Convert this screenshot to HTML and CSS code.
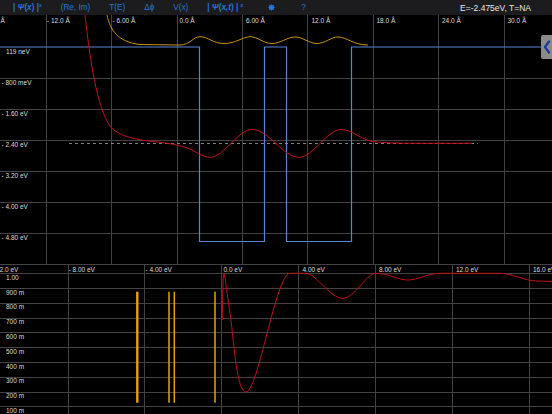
FILE: index.html
```html
<!DOCTYPE html>
<html lang="en">
<head>
  <meta charset="UTF-8" />
  <meta name="viewport" content="width=device-width, initial-scale=1.0" />
  <title>Wave packet – potential well</title>
  <link rel="stylesheet" href="styles.css">
</head>
<body>
  <div class="toolbar">
    <div class="tabs">
      <span class="tab strong">| <i>Ψ</i>(<i>x</i>) |²</span>
      <span class="tab">(Re, Im)</span>
      <span class="tab">T(E)</span>
      <span class="tab">Δϕ</span>
      <span class="tab">V(x)</span>
      <span class="tab strong">| <i>Ψ</i>(<i>x,t</i>) | ²</span>
      <span class="tab">
        <svg class="gear" viewBox="0 0 10 10">
          <circle cx="5" cy="5" r="2.8" />
          <path d="M5 0.6v8.8M0.6 5h8.8M1.9 1.9l6.2 6.2M8.1 1.9l-6.2 6.2" />
        </svg>
      </span>
      <span class="tab">?</span>
    </div>
    <div class="readout">E=-2.475eV, T=NA</div>
  </div>

  <!-- wave function / potential -->
  <svg class="plot plot-top" width="552" height="250" viewBox="0 15 552 250">
    <g class="grid">
      <path d="M46.5 15V265M111.5 15V265M177.5 15V265M242.5 15V265M307.5 15V265M373.5 15V265M438.5 15V265M504.5 15V265" />
      <path d="M0 78.5H552M0 109.5H552M0 140.5H552M0 171.5H552M0 202.5H552M0 233.5H552M0 264.5H552" />
    </g>
    <g class="axis-label">
      <text x="-18" y="22.5">- 18.0 Å</text>
      <text x="47" y="22.5">- 12.0 Å</text>
      <text x="112.5" y="22.5">- 6.00 Å</text>
      <text x="179.5" y="22.5">0.0 Å</text>
      <text x="246" y="22.5">6.00 Å</text>
      <text x="311.5" y="22.5">12.0 Å</text>
      <text x="376.5" y="22.5">18.0 Å</text>
      <text x="442" y="22.5">24.0 Å</text>
      <text x="507.5" y="22.5">30.0 Å</text>

      <text x="6" y="53.5">119 neV</text>
      <text x="1.5" y="85">- 800 meV</text>
      <text x="1.5" y="116">- 1.60 eV</text>
      <text x="1.5" y="147">- 2.40 eV</text>
      <text x="1.5" y="178">- 3.20 eV</text>
      <text x="1.5" y="209">- 4.00 eV</text>
      <text x="1.5" y="240">- 4.80 eV</text>
    </g>
    <path class="potential" d="M0 47H199.5V241.5H264.5V47H286.5V241.5H351.5V47H552" />
    <path class="energy" d="M69 143.5H478" />
    <path class="density" d="M107 15C110 30 118 42 140 44.5L180 45C190 45 193 36.7 200 36.7C208 36.7 213 43.5 224 43.5C236 43.5 243 36.7 250 36.7C258 36.7 263 43.5 272 43.5C281 43.5 287 37 295 37C303 37 309 43.5 317 43.5C325 43.5 331 37 338 37C347 37 353 45 368 45" />
    <path class="real" d="M85 15C89 50 95 100 108 123C115 135 130 139 157 142C168 143 178 145 186 147.5C194 150 202 157.3 210 157.3C224 157.3 238 129.3 252.3 129.3C268 129.3 283.4 157.3 299 157.3C313 157.3 327 129.5 341 129.5C352 129.5 358 138 372 141.5C384 143 400 143.2 420 143.3L472 143.3" />
    <g class="drawer">
      <path class="drawer-tab" d="M543 35H553V59H543Q541 59 541 57V37Q541 35 543 35Z" />
      <path class="drawer-arrow" d="M549 41.5L545 47L549 52.5" />
    </g>
  </svg>

  <!-- transmission -->
  <svg class="plot plot-bottom" width="552" height="149" viewBox="0 265 552 149">
    <g class="grid">
      <path d="M68.5 265V414M144.5 265V414M221.5 265V414M298.5 265V414M375.5 265V414M452.5 265V414M529.5 265V414" />
      <path d="M0 273.5H552M0 288.5H552M0 303.5H552M0 318.5H552M0 332.5H552M0 347.5H552M0 362.5H552M0 377.5H552M0 392.5H552M0 406.5H552" />
    </g>
    <g class="axis-label">
      <text x="-8" y="271.8">- 12.0 eV</text>
      <text x="68.5" y="271.8">- 8.00 eV</text>
      <text x="145.5" y="271.8">- 4.00 eV</text>
      <text x="223.5" y="271.8">0.0 eV</text>
      <text x="302.5" y="271.8">4.00 eV</text>
      <text x="379" y="271.8">8.00 eV</text>
      <text x="456" y="271.8">12.0 eV</text>
      <text x="533" y="271.8">16.0 eV</text>

      <text x="6" y="279.7">1.00</text>
      <text x="6" y="294.5">900 m</text>
      <text x="6" y="309.3">800 m</text>
      <text x="6" y="324.1">700 m</text>
      <text x="6" y="338.9">600 m</text>
      <text x="6" y="353.7">500 m</text>
      <text x="6" y="368.5">400 m</text>
      <text x="6" y="383.3">300 m</text>
      <text x="6" y="398.1">200 m</text>
      <text x="6" y="412.9">100 m</text>
    </g>
    <g class="levels">
      <path class="level wide" d="M137.3 291.7V402.7" />
      <path class="level" d="M169 291.7V402.7" />
      <path class="level" d="M174.3 291.7V402.7" />
      <path class="level" d="M215 291.7V402.7" />
    </g>
    <path class="real" d="M222.3 320C222.6 300 223 273.3 223.8 273.3C225 273.3 227 295 231 320C234 345 237 392 246 392C258 392 276 273.3 290 273.3L306 273.3C316 273.3 330 298.3 342.7 298.3C355 298.3 366 273.3 376 273.3C388 273.3 398 280 408 280C418 280 428 273.3 440 273.3L500 273.3C512 273.3 525 281 537 281L552 281.5" />
  </svg>
</body>
</html>
```

FILE: styles.css
```css
html,
body {
  margin: 0;
  background: #000;
}
body {
  width: 552px;
  height: 414px;
  overflow: hidden;
  font-family: "Liberation Sans", Arial, sans-serif;
}

.toolbar {
  display: flex;
  align-items: center;
  height: 15px;
  background: #1c1c1e;
}
.tabs {
  display: flex;
  align-items: center;
  gap: 19px;
  padding-left: 13px;
}
.tab {
  font-size: 8.2px;
  color: #2a73d6;
  white-space: nowrap;
}
.tab.strong {
  font-weight: bold;
}
.gear {
  display: block;
  width: 7px;
  height: 7px;
  margin: 0 7px 0 6px;
  fill: #2a73d6;
  stroke: #2a73d6;
  stroke-width: 1.5;
}
.readout {
  margin-left: auto;
  padding-right: 21px;
  font-size: 8.5px;
  color: #e6e6e6;
}

.plot {
  display: block;
}
.grid path {
  fill: none;
  stroke: #434343;
  stroke-width: 1;
}
.axis-label text {
  font-size: 6.5px;
  fill: #dcdcdc;
}
.potential {
  fill: none;
  stroke: #5b83d3;
  stroke-width: 1.2;
}
.energy {
  fill: none;
  stroke: #a0a0a0;
  stroke-width: 0.8;
  stroke-dasharray: 3 3;
}
.density {
  fill: none;
  stroke: #c79409;
  stroke-width: 1;
}
.real {
  fill: none;
  stroke: #c3101a;
  stroke-width: 1;
}
.drawer-tab {
  fill: #8b8b8b;
}
.drawer-arrow {
  fill: none;
  stroke: #1a37a0;
  stroke-width: 2.2;
  stroke-linecap: round;
  stroke-linejoin: round;
}
.level {
  fill: none;
  stroke: #e9a300;
  stroke-width: 1.5;
}
.level.wide {
  stroke-width: 2.4;
}
```
